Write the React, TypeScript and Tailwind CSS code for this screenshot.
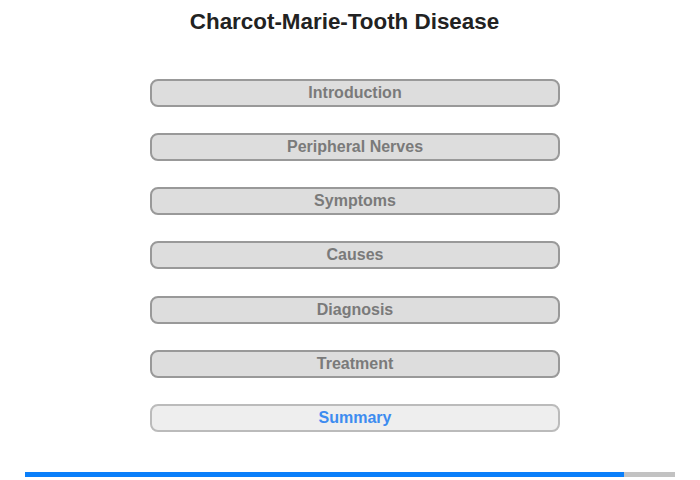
import React from 'react';

const sections = [
  'Introduction',
  'Peripheral Nerves',
  'Symptoms',
  'Causes',
  'Diagnosis',
  'Treatment',
  'Summary',
];

const App: React.FC = () => {
  const active = 'Summary';

  return (
    <div className="w-[700px] h-[480px] bg-white font-['Liberation_Sans',Arial,sans-serif] flex flex-col">
      {/* Title */}
      <div className="w-[689px] pt-[9px] flex justify-center">
        <h1 className="text-[22.4px] leading-[26px] font-bold text-[#222]">Charcot-Marie-Tooth Disease</h1>
      </div>

      {/* Menu */}
      <div className="ml-[150px] mt-[44px] w-[410px] flex flex-col gap-[26.17px]">
        {sections.map((s) => (
          <button
            key={s}
            className={
              s === active
                ? 'h-[28px] w-full flex items-center justify-center rounded-[8px] border-2 border-[#bbbbbb] bg-[#eeeeee] text-[16px] font-bold text-[#3d8cf0]'
                : 'h-[28px] w-full flex items-center justify-center rounded-[8px] border-2 border-[#999999] bg-[#dddddd] text-[16px] font-bold text-[#7a7a7a]'
            }
          >
            {s}
          </button>
        ))}
      </div>

      {/* Progress */}
      <div className="ml-[25px] mt-[40px] w-[650px] h-[5px] flex bg-[#c2c2c2]">
        <div className="h-full w-[599px] bg-[#0a7ffa]" />
      </div>
    </div>
  );
};

export default App;
